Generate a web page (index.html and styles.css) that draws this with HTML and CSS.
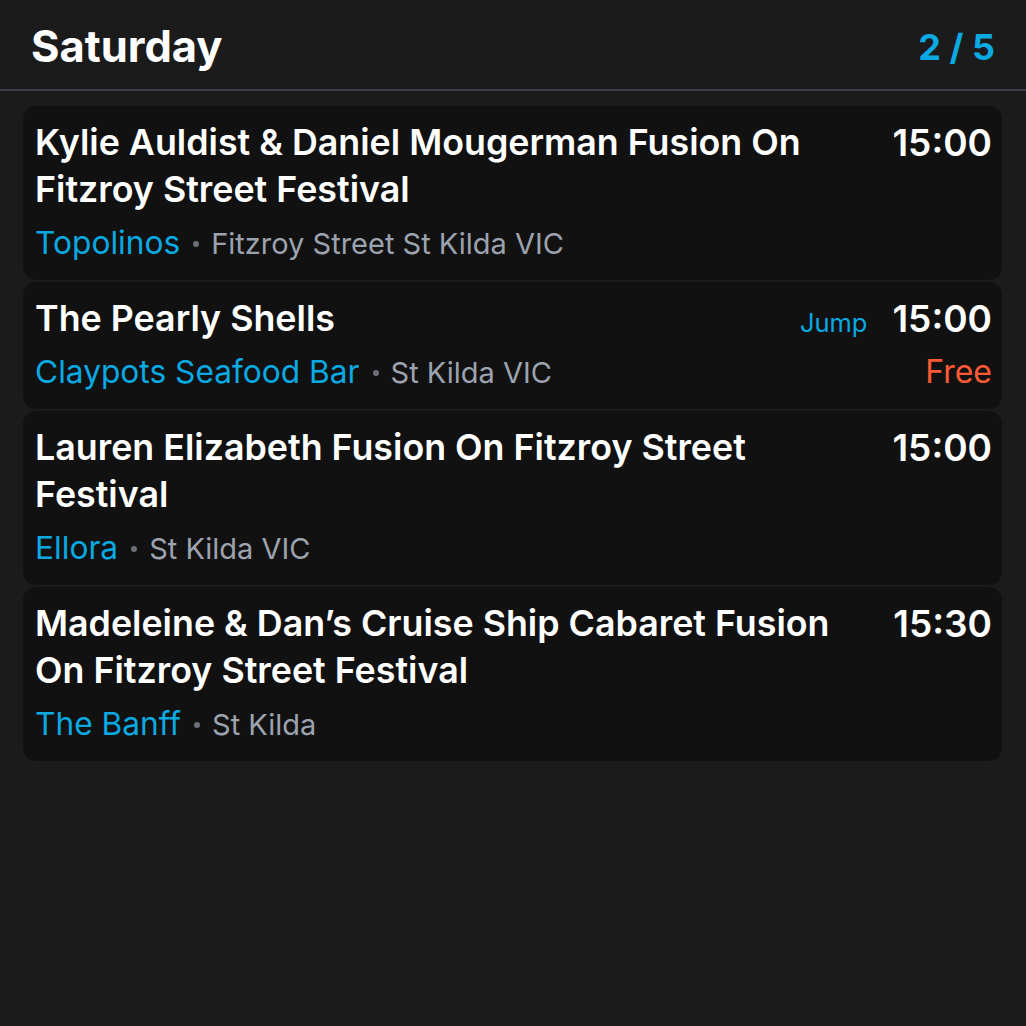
FILE: index.html
```html
<!DOCTYPE html>
<html lang="en">
<head>
<meta charset="utf-8">
<title>Saturday</title>
<link rel="stylesheet" href="styles.css">
</head>
<body>
<div class="page">
  <header class="header">
    <h1 class="day">Saturday</h1>
    <div class="pager">2 / 5</div>
  </header>
  <main class="list">
    <article class="card">
      <div class="row">
        <div class="title">Kylie Auldist &amp; Daniel Mougerman Fusion On Fitzroy Street Festival</div>
        <div class="side"><span class="time">15:00</span></div>
      </div>
      <div class="row">
        <div class="venue"><span class="place">Topolinos</span><span class="dot"></span><span class="loc">Fitzroy Street St Kilda VIC</span></div>
      </div>
    </article>
    <article class="card">
      <div class="row">
        <div class="title">The Pearly Shells</div>
        <div class="side"><span class="jump">Jump</span><span class="time">15:00</span></div>
      </div>
      <div class="row">
        <div class="venue"><span class="place">Claypots Seafood Bar</span><span class="dot"></span><span class="loc">St Kilda VIC</span></div>
        <div class="price">Free</div>
      </div>
    </article>
    <article class="card">
      <div class="row">
        <div class="title">Lauren Elizabeth Fusion On Fitzroy Street Festival</div>
        <div class="side"><span class="time">15:00</span></div>
      </div>
      <div class="row">
        <div class="venue"><span class="place">Ellora</span><span class="dot"></span><span class="loc">St Kilda VIC</span></div>
      </div>
    </article>
    <article class="card">
      <div class="row">
        <div class="title">Madeleine &amp; Dan’s Cruise Ship Cabaret Fusion On Fitzroy Street Festival</div>
        <div class="side"><span class="time">15:30</span></div>
      </div>
      <div class="row">
        <div class="venue"><span class="place">The Banff</span><span class="dot"></span><span class="loc">St Kilda</span></div>
      </div>
    </article>
  </main>
</div>
</body>
</html>
```

FILE: styles.css
```css
* { box-sizing: border-box; }
html, body {
  margin: 0;
  padding: 0;
  background: #1b1b1b;
  font-family: Inter, "Noto Sans", sans-serif;
  color: #ffffff;
}
.page {
  width: 1026px;
  min-height: 1026px;
  background: #1b1b1b;
}
.header {
  display: flex;
  align-items: center;
  justify-content: space-between;
  padding: 4px 31px 0 31px;
  height: 91px;
  border-bottom: 2px solid #3a3f4a;
}
.day {
  margin: 0;
  font-size: 43.5px;
  font-weight: 700;
  line-height: 1;
}
.pager {
  font-size: 36px;
  font-weight: 700;
  color: #0aa9e2;
  line-height: 1;
}
.list {
  display: flex;
  flex-direction: column;
  gap: 2px;
  padding: 15px 24px 0 23px;
}
.card {
  background: #111111;
  border-radius: 13px;
  padding: 13px 10px 15px 12px;
  display: flex;
  flex-direction: column;
  gap: 8px;
}
.row {
  display: flex;
  align-items: flex-start;
  justify-content: space-between;
  gap: 30px;
}
.title {
  flex: 1;
  font-size: 35.8px;
  font-weight: 600;
  line-height: 47px;
}
.side {
  display: flex;
  align-items: baseline;
  gap: 25px;
  flex-shrink: 0;
  height: 47px;
  line-height: 47px;
}
.time {
  font-size: 37px;
  font-weight: 600;
}
.jump {
  font-size: 25.5px;
  color: #0aa9e2;
}
.venue {
  display: flex;
  align-items: baseline;
  height: 44px;
  line-height: 44px;
  font-size: 29px;
  color: #9ca3af;
}
.place {
  font-size: 31.7px;
  color: #0aa9e2;
}
.dot {
  align-self: center;
  width: 6px;
  height: 6px;
  border-radius: 50%;
  background: #6b6f78;
  margin: 2px 12px 0 13px;
}
.price {
  font-size: 32px;
  height: 44px;
  line-height: 44px;
  color: #ff5a36;
}
```
